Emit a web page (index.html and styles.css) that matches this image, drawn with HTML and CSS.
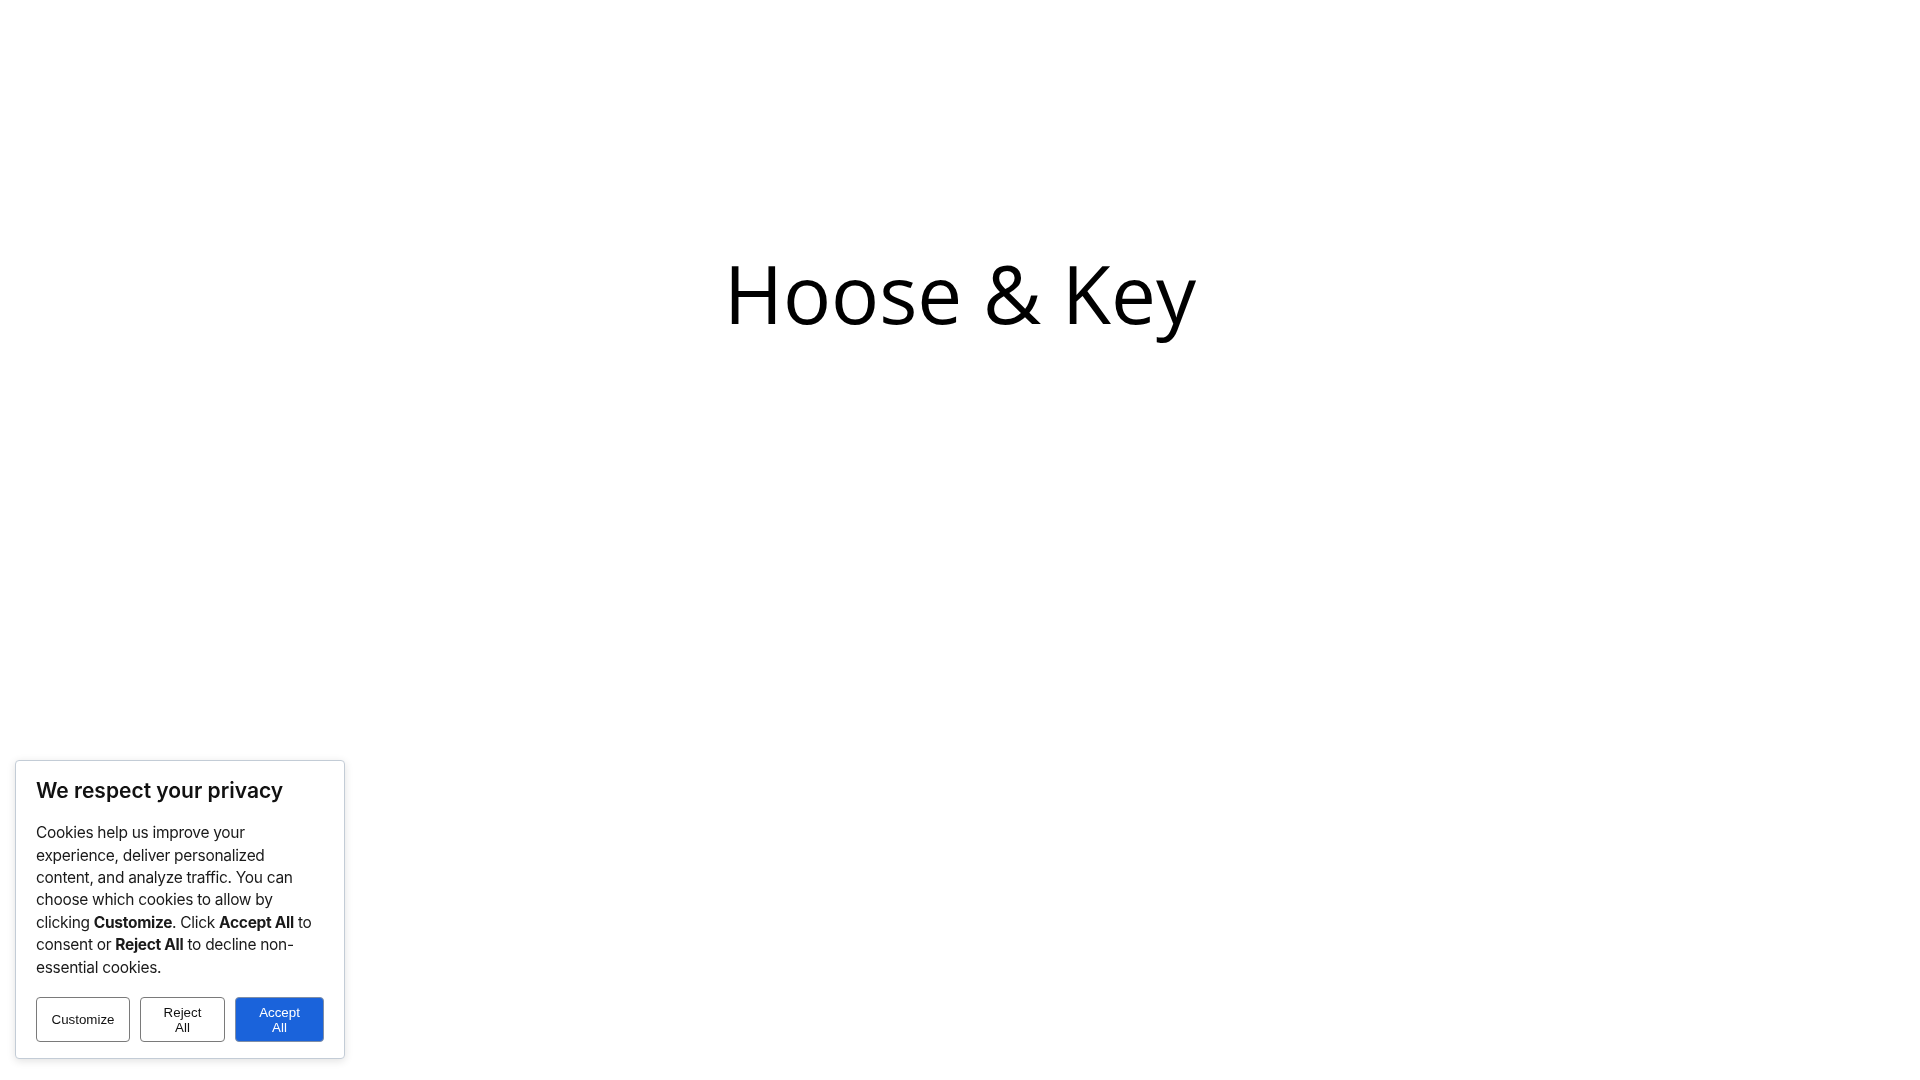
FILE: index.html
```html
<!DOCTYPE html>
<html lang="en">
<head>
<meta charset="utf-8">
<title>Hoose &amp; Key</title>
<link rel="stylesheet" href="styles.css">
</head>
<body>
<main class="page">
  <h1 class="brand">Hoose &amp; Key</h1>
</main>
<aside class="consent">
  <h2 class="consent-title">We respect your privacy</h2>
  <p class="consent-text">Cookies help us improve your experience, deliver personalized content, and analyze traffic. You can choose which cookies to allow by clicking <b>Customize</b>. Click <b>Accept All</b> to consent or <b>Reject All</b> to decline non-essential cookies.</p>
  <div class="consent-actions">
    <button class="btn btn-customize" type="button">Customize</button>
    <button class="btn btn-reject" type="button">Reject<br>All</button>
    <button class="btn btn-accept" type="button">Accept<br>All</button>
  </div>
</aside>
</body>
</html>
```
FILE: styles.css
```css
html, body {
  margin: 0;
  padding: 0;
  background: #ffffff;
}

body {
  font-family: "Open Sans", "Noto Sans", sans-serif;
  color: #000;
  min-height: 1080px;
}

.page {
  display: flex;
  justify-content: center;
  padding-top: 239px;
}

.brand {
  margin: 0;
  font-family: "Open Sans", sans-serif;
  font-weight: 400;
  font-size: 80px;
  line-height: 1.362;
  color: #000;
  text-align: center;
}

.consent {
  position: fixed;
  left: 15px;
  bottom: 21px;
  box-sizing: border-box;
  width: 330px;
  padding: 16px 20px 16px;
  background: #fff;
  border: 1px solid #c3ccd6;
  border-radius: 4px;
  box-shadow: 0 2px 8px rgba(0, 0, 0, 0.12);
  font-family: "Inter", "Noto Sans", sans-serif;
  color: #111;
}

.consent-title {
  margin: 0 0 17px;
  font-size: 21px;
  font-weight: 600;
  line-height: 28px;
  color: #111;
}

.consent-text {
  margin: 0;
  font-size: 15.5px;
  line-height: 22.4px;
  font-weight: 400;
  letter-spacing: -0.3px;
  color: #1a1a1a;
}

.consent-text b {
  font-weight: 700;
}

.consent-actions {
  display: flex;
  gap: 10px;
  margin-top: 18px;
}

.btn {
  box-sizing: border-box;
  height: 45px;
  padding: 0 6px;
  font-family: "Liberation Sans", Arial, sans-serif;
  font-size: 13.33px;
  line-height: 15px;
  border-radius: 4px;
  cursor: pointer;
}

.btn-customize {
  flex: 0 0 94px;
  background: #fff;
  color: #111;
  border: 1px solid #7a7a7a;
}

.btn-reject {
  flex: 0 0 85px;
  background: #fff;
  color: #111;
  border: 1px solid #7a7a7a;
}

.btn-accept {
  flex: 0 0 89px;
  background: #1a63db;
  color: #fff;
  border: 1px solid #7f8ea6;
}
```
